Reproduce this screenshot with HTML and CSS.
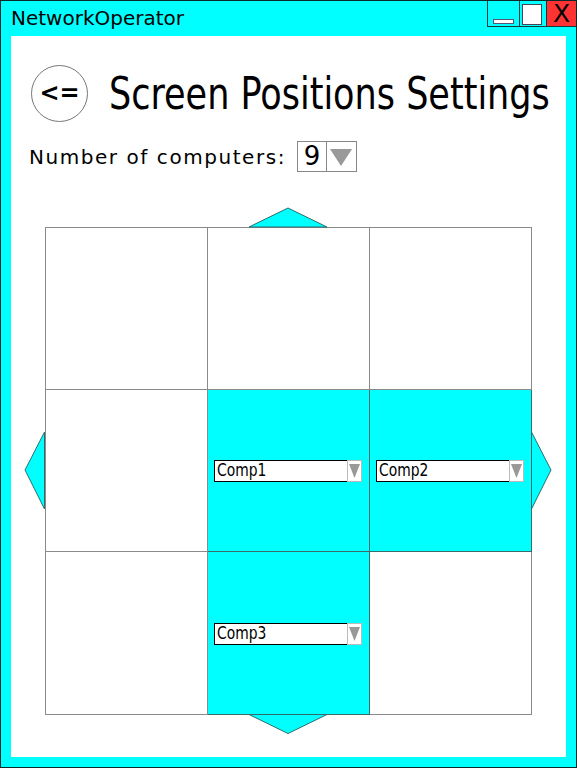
FILE: index.html
```html
<!DOCTYPE html>
<html>
<head>
<meta charset="utf-8">
<link rel="stylesheet" href="styles.css">
</head>
<body>
<div class="window">
  <div class="titlebar">
    <span class="title">NetworkOperator</span>
    <div class="controls">
      <div class="btn min"><span class="bar"></span></div>
      <div class="btn max"><span class="box"></span></div>
      <div class="btn close">X</div>
    </div>
  </div>
  <div class="content">
    <div class="header">
      <div class="back">&lt;=</div>
      <h1 class="heading">Screen Positions Settings</h1>
    </div>
    <div class="count-row">
      <span class="count-label">Number of computers:</span>
      <div class="spinner">
        <span class="spin-val">9</span>
        <span class="spin-arrow"><svg width="22" height="18" viewBox="0 0 22 18"><polygon points="0,1 22,1 11,18" fill="#999"/></svg></span>
      </div>
    </div>
    <div class="grid-wrap">
      <svg class="arrow arrow-top" width="80" height="21" viewBox="0 0 80 21"><polygon points="1,20 40,1 79,20" fill="#00ffff" stroke="#2d6d6d" stroke-width="1"/></svg>
      <svg class="arrow arrow-bottom" width="80" height="21" viewBox="0 0 80 21"><polygon points="1,0.5 40,19.5 79,0.5" fill="#00ffff" stroke="#2d6d6d" stroke-width="1"/></svg>
      <svg class="arrow arrow-left" width="21" height="80" viewBox="0 0 21 80"><polygon points="20.5,1 1,39 20.5,78" fill="#00ffff" stroke="#2d6d6d" stroke-width="1"/></svg>
      <svg class="arrow arrow-right" width="21" height="80" viewBox="0 0 21 80"><polygon points="0.5,1 20,39 0.5,78" fill="#00ffff" stroke="#2d6d6d" stroke-width="1"/></svg>
      <div class="grid">
        <div class="cell"></div>
        <div class="cell"></div>
        <div class="cell"></div>
        <div class="cell"></div>
        <div class="cell on"><div class="combo"><span class="combo-text"><span class="combo-label">Comp1</span></span><span class="combo-arrow"><svg width="11" height="14" viewBox="0 0 11 14"><polygon points="0,0 11,0 5.5,14" fill="#999"/></svg></span></div></div>
        <div class="cell on"><div class="combo"><span class="combo-text"><span class="combo-label">Comp2</span></span><span class="combo-arrow"><svg width="11" height="14" viewBox="0 0 11 14"><polygon points="0,0 11,0 5.5,14" fill="#999"/></svg></span></div></div>
        <div class="cell"></div>
        <div class="cell on"><div class="combo"><span class="combo-text"><span class="combo-label">Comp3</span></span><span class="combo-arrow"><svg width="11" height="14" viewBox="0 0 11 14"><polygon points="0,0 11,0 5.5,14" fill="#999"/></svg></span></div></div>
        <div class="cell"></div>
      </div>
    </div>
  </div>
</div>
</body>
</html>
```
FILE: styles.css
```css
* { box-sizing: border-box; }
html, body { margin: 0; padding: 0; overflow: hidden; }
body { font-family: "DejaVu Sans", sans-serif; background: #fff; }

.window {
  width: 577px;
  height: 768px;
  background: #00ffff;
  border: 1px solid #0a2a2a;
  display: flex;
  flex-direction: column;
  overflow: hidden;
}

.titlebar {
  height: 35px;
  display: flex;
  justify-content: space-between;
  align-items: flex-start;
}
.title {
  font-size: 20px;
  color: #000;
  margin-left: 10px;
  margin-top: 5px;
  line-height: 24px;
}
.controls { display: flex; height: 27px; margin-top: -1px; }
.btn {
  height: 27px;
  border: 1px solid #1a3a3a;
  margin-left: -1px;
  position: relative;
}
.min { width: 33px; background: #00ffff; }
.min .bar {
  position: absolute;
  left: 5px; bottom: 2px;
  width: 21px; height: 5px;
  background: #fff;
  border: 1px solid #557;
}
.max { width: 28px; background: #00ffff; }
.max .box {
  position: absolute;
  left: 2px; top: 3px;
  width: 20px; height: 21px;
  background: #fff;
  border: 1px solid #445;
}
.close {
  width: 30px;
  background: #ff3333;
  color: #000;
  font-size: 25px;
  line-height: 25px;
  text-align: center;
  border-right: none;
  display: flex;
  align-items: center;
  justify-content: center;
}

.content {
  margin: 0 10px 0 10px;
  height: 721px;
  background: #fff;
  display: flex;
  flex-direction: column;
  overflow: hidden;
}

.header {
  display: flex;
  align-items: center;
  margin-top: 29px;
  margin-left: 20px;
}
.back {
  flex: none;
  width: 57px;
  height: 57px;
  border: 1px solid #777;
  border-radius: 50%;
  display: flex;
  align-items: center;
  justify-content: center;
  font-family: "DejaVu Sans", sans-serif;
  font-weight: bold;
  font-size: 24px;
  color: #000;
  padding-bottom: 2px;
}
.heading {
  margin: 0 0 0 21px;
  font-family: "DejaVu Sans Condensed", "DejaVu Sans", sans-serif;
  font-stretch: condensed;
  font-weight: normal;
  font-size: 44px;
  line-height: 48px;
  white-space: nowrap;
  color: #000;
  transform: scaleX(0.885);
  transform-origin: left center;
}

.count-row {
  display: flex;
  align-items: center;
  margin-top: 19px;
  margin-left: 18px;
}
.count-label {
  font-size: 20px;
  letter-spacing: 1.55px;
  color: #000;
}
.spinner {
  display: flex;
  margin-left: 11px;
  height: 31px;
}
.spin-val {
  width: 30px;
  border: 1px solid #888;
  font-size: 26px;
  line-height: 29px;
  text-align: center;
  color: #000;
}
.spin-arrow {
  width: 31px;
  border: 1px solid #888;
  margin-left: -1px;
  display: flex;
  align-items: center;
  justify-content: center;
}

.grid-wrap {
  position: relative;
  margin-top: 55px;
  margin-left: 34px;
  width: 487px;
  height: 488px;
}
.grid {
  display: grid;
  grid-template-columns: 162px 162px 162px;
  grid-template-rows: 162px 162px 163px;
  border-left: 1px solid #8a8a8a;
  border-top: 1px solid #8a8a8a;
  width: 487px;
}
.cell {
  border-right: 1px solid #8a8a8a;
  border-bottom: 1px solid #8a8a8a;
  display: flex;
  align-items: center;
  padding-left: 6px;
}
.cell.on { background: #00ffff; border-color: #3a6a6a; }

.combo {
  display: flex;
  width: 148px;
  height: 22px;
  margin-top: 1px;
}
.combo-text {
  width: 134px;
  background: #fff;
  border: 1px solid #000;
  font-family: "DejaVu Sans Condensed", "DejaVu Sans", sans-serif;
  font-stretch: condensed;
  font-size: 17.5px;
  line-height: 19px;
  padding-left: 2px;
  color: #000;
  overflow: hidden;
}
.combo-label {
  display: inline-block;
  transform: scaleX(0.88);
  transform-origin: left center;
}
.combo-arrow {
  width: 15px;
  margin-left: -1px;
  background: #fff;
  border: 1px solid #bbb;
  display: flex;
  align-items: center;
  justify-content: center;
}

.arrow { position: absolute; z-index: 2; }
.arrow-top { left: 203px; top: -20px; }
.arrow-bottom { left: 203px; top: 487px; }
.arrow-left { left: -21px; top: 204px; }
.arrow-right { left: 486px; top: 204px; }
```
